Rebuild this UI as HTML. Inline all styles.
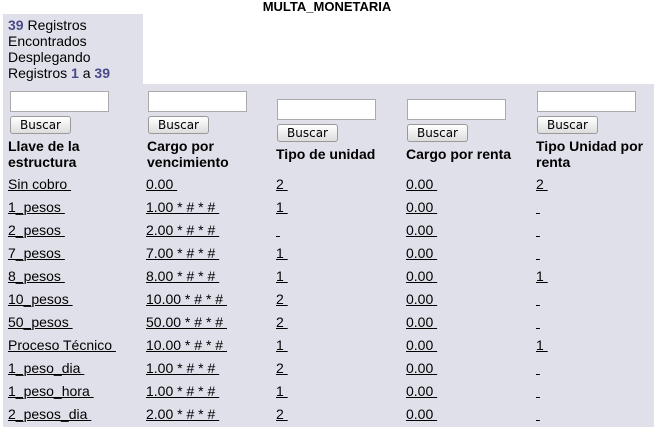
<!DOCTYPE html>
<html><head><meta charset="utf-8"><style>
*{margin:0;padding:0;box-sizing:border-box}
body{width:654px;height:427px;background:#fff;font-family:"Liberation Sans",Arial,sans-serif;font-size:14px;color:#000;position:relative;overflow:hidden}
.a{position:absolute;white-space:nowrap}
.title{left:0;width:654px;top:-1px;text-align:center;font-weight:bold;font-size:13px}
.bg{position:absolute;background:#e0e0ea}
.n{color:#4a4a8a;font-weight:bold}
.inp{position:absolute;width:99px;height:21px;background:#fff;border:1px solid #aaa}
.btn{position:absolute;width:61px;height:18px;border:1px solid #999;border-radius:3px;background:linear-gradient(#fff,#ddd);font-size:12px;text-align:center;line-height:16px;font-family:"DejaVu Sans","Liberation Sans",sans-serif}
.h{position:absolute;font-weight:bold;line-height:16px;font-size:14px}
u{text-decoration:underline}
</style></head><body>
<div class="a title">MULTA_MONETARIA</div>
<div class="bg" style="left:3px;top:14px;width:140px;height:70px"></div>
<div class="bg" style="left:3px;top:84px;width:651px;height:343px"></div>
<div class="a" style="left:8px;top:17px;line-height:16px;white-space:normal;width:135px"><span class="n">39</span> Registros<br>Encontrados<br>Desplegando<br>Registros <span class="n">1</span> a <span class="n">39</span></div>

<div class="inp" style="left:10px;top:91px"></div><div class="btn" style="left:10px;top:116px">Buscar</div>
<div class="inp" style="left:148px;top:91px"></div><div class="btn" style="left:148px;top:116px">Buscar</div>
<div class="inp" style="left:277px;top:99px"></div><div class="btn" style="left:277px;top:124px">Buscar</div>
<div class="inp" style="left:407px;top:99px"></div><div class="btn" style="left:407px;top:124px">Buscar</div>
<div class="inp" style="left:537px;top:91px"></div><div class="btn" style="left:537px;top:116px">Buscar</div>

<div class="h" style="left:8px;top:138px">Llave de la<br>estructura</div>
<div class="h" style="left:147px;top:138px">Cargo por<br>vencimiento</div>
<div class="h" style="left:276px;top:146px">Tipo de unidad</div>
<div class="h" style="left:406px;top:146px">Cargo por renta</div>
<div class="h" style="left:536px;top:138px">Tipo Unidad por<br>renta</div>

<div class="a" style="left:8px;top:173px;line-height:23px"><u>Sin cobro&nbsp;</u><br><u>1_pesos&nbsp;</u><br><u>2_pesos&nbsp;</u><br><u>7_pesos&nbsp;</u><br><u>8_pesos&nbsp;</u><br><u>10_pesos&nbsp;</u><br><u>50_pesos&nbsp;</u><br><u>Proceso Técnico&nbsp;</u><br><u>1_peso_dia&nbsp;</u><br><u>1_peso_hora&nbsp;</u><br><u>2_pesos_dia&nbsp;</u></div>
<div class="a" style="left:146px;top:173px;line-height:23px"><u>0.00&nbsp;</u><br><u>1.00 * # * #&nbsp;</u><br><u>2.00 * # * #&nbsp;</u><br><u>7.00 * # * #&nbsp;</u><br><u>8.00 * # * #&nbsp;</u><br><u>10.00 * # * #&nbsp;</u><br><u>50.00 * # * #&nbsp;</u><br><u>10.00 * # * #&nbsp;</u><br><u>1.00 * # * #&nbsp;</u><br><u>1.00 * # * #&nbsp;</u><br><u>2.00 * # * #&nbsp;</u></div>
<div class="a" style="left:276px;top:173px;line-height:23px"><u>2&nbsp;</u><br><u>1&nbsp;</u><br><u>&nbsp;</u><br><u>1&nbsp;</u><br><u>1&nbsp;</u><br><u>2&nbsp;</u><br><u>2&nbsp;</u><br><u>1&nbsp;</u><br><u>2&nbsp;</u><br><u>1&nbsp;</u><br><u>2&nbsp;</u></div>
<div class="a" style="left:406px;top:173px;line-height:23px"><u>0.00&nbsp;</u><br><u>0.00&nbsp;</u><br><u>0.00&nbsp;</u><br><u>0.00&nbsp;</u><br><u>0.00&nbsp;</u><br><u>0.00&nbsp;</u><br><u>0.00&nbsp;</u><br><u>0.00&nbsp;</u><br><u>0.00&nbsp;</u><br><u>0.00&nbsp;</u><br><u>0.00&nbsp;</u></div>
<div class="a" style="left:536px;top:173px;line-height:23px"><u>2&nbsp;</u><br><u>&nbsp;</u><br><u>&nbsp;</u><br><u>&nbsp;</u><br><u>1&nbsp;</u><br><u>&nbsp;</u><br><u>&nbsp;</u><br><u>1&nbsp;</u><br><u>&nbsp;</u><br><u>&nbsp;</u><br><u>&nbsp;</u></div>
</body></html>
